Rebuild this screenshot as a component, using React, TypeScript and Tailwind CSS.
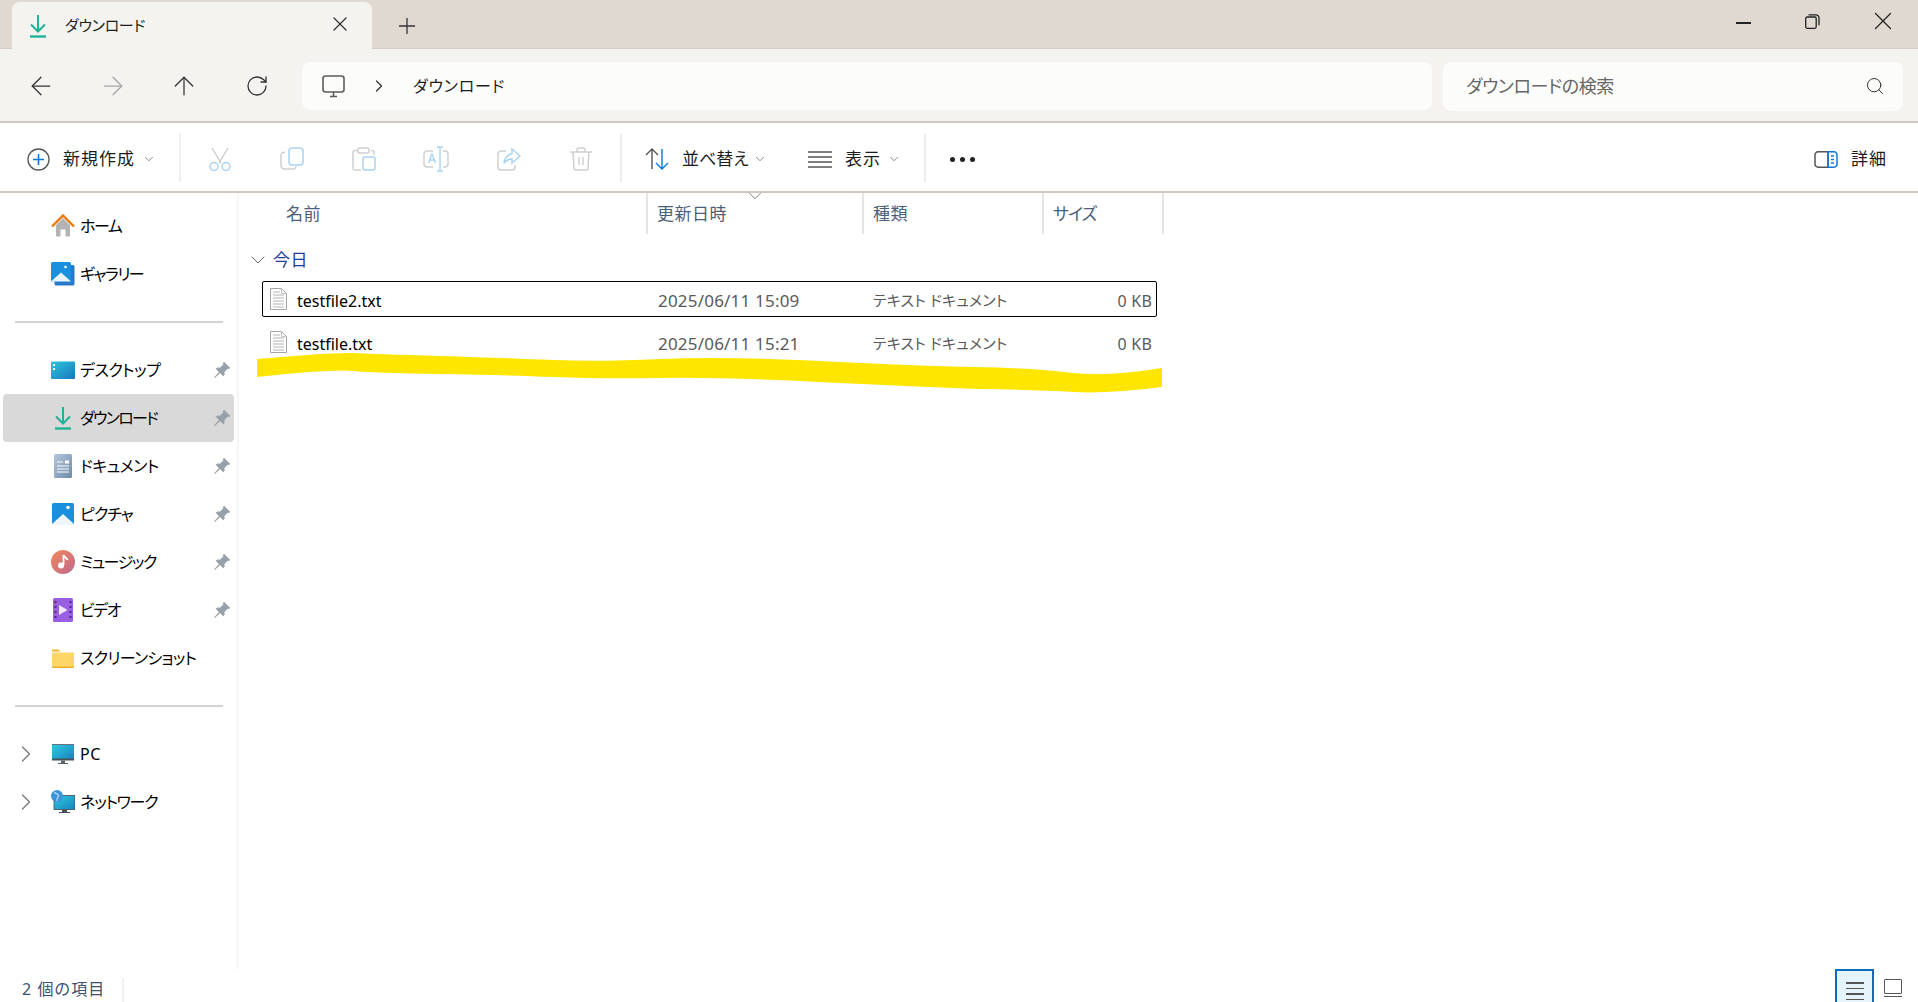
import { ChevronDown, ChevronRight, X, Plus, ArrowLeft, ArrowRight, ArrowUp, RotateCw, Search } from "lucide-react";
import type { ReactNode } from "react";

const Download = ({ size = 24 }: { size?: number }) => (
  <svg width={size} height={size} viewBox="0 0 24 24" fill="none" stroke="#1fb294" strokeWidth="2">
    <path d="M12 1v16M5 10.5l7 7 7-7" />
    <path d="M4 22.5h16" strokeWidth="2.4" />
  </svg>
);

const Pin = () => (
  <svg width="18" height="18" viewBox="0 0 16 16" fill="#98a1a9">
    <path d="M9.8.6l5.6 5.6-1.4 1-1-.3-2.8 2.8.1 2.6-1.3 1.3-2.7-2.9L1.600 15l-.6-.6 4.3-4.7-2.9-2.7 1.3-1.3 2.6.1 2.8-2.8-.3-1z" />
  </svg>
);

const Icon = ({ children }: { children: ReactNode }) => (
  <svg width="24" height="24" viewBox="0 0 24 24" fill="none">
    {children}
  </svg>
);

const HomeIcon = () => (
  <Icon>
    <path d="M5 11l7-7 7 7v10.5a1 1 0 01-1 1h-3.5v-7h-5v7H6a1 1 0 01-1-1z" fill="#b4b4b4" />
    <path d="M1 12.5L12 1.500l11 11" stroke="#e8790c" strokeWidth="2.4" />
  </Icon>
);
const GalleryIcon = () => (
  <Icon>
    <rect x="3.5" y="3" width="20" height="20.5" rx="1.5" fill="#2a78c9" />
    <rect x="0" y="0" width="20" height="19.5" rx="1.5" fill="#1a90de" />
    <path d="M0 19.5l10-9 10 9z" fill="#e9f4fc" />
    <circle cx="14.5" cy="5" r="1.3" fill="#fff" />
  </Icon>
);
const DesktopIcon = () => (
  <Icon>
    <defs>
      <linearGradient id="dsk" x1="0" y1="0" x2="1" y2="1">
        <stop offset="0" stopColor="#2cc6dd" />
        <stop offset="1" stopColor="#1876bb" />
      </linearGradient>
    </defs>
    <rect x="0" y="3.5" width="24" height="17.5" rx="1" fill="url(#dsk)" />
    <rect x="2" y="6" width="2" height="2" fill="#fff" />
    <rect x="2" y="10" width="2" height="2" fill="#fff" />
  </Icon>
);
const DocIcon = () => (
  <Icon>
    <defs>
      <linearGradient id="doc" x1="0" y1="0" x2="1" y2="1">
        <stop offset="0" stopColor="#b4c8de" />
        <stop offset="1" stopColor="#6f8ba8" />
      </linearGradient>
    </defs>
    <rect x="3" y="0" width="18" height="24" rx="1.5" fill="url(#doc)" />
    <path d="M6 8h6M6 12h12M6 15h12M6 18h12" stroke="#fff" strokeWidth="1.2" />
    <rect x="14" y="6.5" width="4" height="3" fill="#fff" />
  </Icon>
);
const PictureIcon = () => (
  <Icon>
    <rect x="1" y="1" width="22" height="22" rx="1.5" fill="#1a8fdd" />
    <path d="M1 22l11-10 11 10v1H1z" fill="#eef6fc" />
    <circle cx="17" cy="5.5" r="1.8" fill="#fff" />
  </Icon>
);
const MusicIcon = () => (
  <Icon>
    <defs>
      <linearGradient id="mus" x1="0" y1="0" x2="1" y2="1">
        <stop offset="0" stopColor="#f0885a" />
        <stop offset="1" stopColor="#c0688f" />
      </linearGradient>
    </defs>
    <circle cx="12" cy="12" r="12" fill="url(#mus)" />
    <path d="M12.5 5v10" stroke="#fff" strokeWidth="1.8" />
    <path d="M12.5 5c.5 2.5 3.5 2.5 4 5" stroke="#fff" strokeWidth="1.8" />
    <circle cx="10" cy="15.5" r="3" fill="#fff" />
  </Icon>
);
const VideoIcon = () => (
  <Icon>
    <rect x="2" y="0" width="20" height="24" rx="1.5" fill="#9a5ee0" />
    <path d="M3.5 3h2v2h-2zM3.5 8h2v2h-2zM3.5 13h2v2h-2zM3.5 18h2v2h-2zM18.5 3h2v2h-2zM18.5 8h2v2h-2zM18.5 13h2v2h-2zM18.5 18h2v2h-2z" fill="#4b2a86" />
    <path d="M8 7l8.5 5L8 17z" fill="#efe6fb" />
  </Icon>
);
const FolderIcon = () => (
  <Icon>
    <path d="M1 4.5a1 1 0 011-1h5.5l2 2H1z" fill="#efb528" />
    <rect x="1" y="6.5" width="22" height="15" rx="1" fill="#fdd667" />
    <path d="M1 20.5h22v.5a1 1 0 01-1 1H2a1 1 0 01-1-1z" fill="#eeb02c" />
  </Icon>
);
const PcIcon = () => (
  <Icon>
    <defs>
      <linearGradient id="pc" x1="0" y1="0" x2="1" y2="1">
        <stop offset="0" stopColor="#2fcbe0" />
        <stop offset="1" stopColor="#1782bd" />
      </linearGradient>
    </defs>
    <rect x="1" y="2" width="22" height="15.5" fill="url(#pc)" />
    <path d="M1 2h22v1H1z" fill="#6b7177" />
    <path d="M1 16.5h22v2H1z" fill="#4a5157" />
    <path d="M10 18.5h4v2.5h3v1H7v-1h3z" fill="#5c6368" />
  </Icon>
);
const NetworkIcon = () => (
  <Icon>
    <defs>
      <linearGradient id="net" x1="0" y1="0" x2="1" y2="1">
        <stop offset="0" stopColor="#2fcbe0" />
        <stop offset="1" stopColor="#1782bd" />
      </linearGradient>
    </defs>
    <rect x="3" y="5.5" width="21" height="14" fill="url(#net)" stroke="#3d4a52" strokeWidth="0.8" />
    <path d="M11 19.5h5v2.5h3v1H8v-1h3z" fill="#4a5157" />
    <circle cx="6" cy="6" r="6" fill="#3d93d8" />
    <path d="M3 2.5c2 1 4 1 4.5 3S5 8 6 11" stroke="#a9d5f5" strokeWidth="1.5" />
  </Icon>
);

const FileIcon = () => (
  <svg width="17" height="22" viewBox="0 0 17 22" fill="none">
    <path d="M.5.5h11l5 5v16H.5z" fill="#fff" stroke="#a4a4a4" />
    <path d="M11.5.5v5h5" stroke="#c4c4c4" />
    <path d="M3 4h7M3 7h11M3 10h11M3 13h11M3 16h11M3 19h11" stroke="#b4b4b4" />
  </svg>
);

const navItems = [
  { label: "ホーム", icon: <HomeIcon />, track: "tracking-[-1.5px]" },
  { label: "ギャラリー", icon: <GalleryIcon />, track: "tracking-[-1.5px]" },
  null,
  { label: "デスクトップ", icon: <DesktopIcon />, pin: true, track: "tracking-[-0.5px]" },
  { label: "ダウンロード", icon: <Download size={24} />, pin: true, active: true, track: "tracking-[-1.7px]" },
  { label: "ドキュメント", icon: <DocIcon />, pin: true, track: "tracking-[-0.5px]" },
  { label: "ピクチャ", icon: <PictureIcon />, pin: true, track: "tracking-[-1px]" },
  { label: "ミュージック", icon: <MusicIcon />, pin: true, track: "tracking-[-1.5px]" },
  { label: "ビデオ", icon: <VideoIcon />, pin: true, track: "tracking-[-1.5px]" },
  { label: "スクリーンショット", icon: <FolderIcon />, track: "tracking-[-0.7px]" },
  null,
  { label: "PC", icon: <PcIcon />, expand: true, track: "tracking-[0.5px]" },
  { label: "ネットワーク", icon: <NetworkIcon />, expand: true, track: "tracking-[-1.2px]" },
];

const files = [
  { name: "testfile2.txt", date: "2025/06/11 15:09", selected: true },
  { name: "testfile.txt", date: "2025/06/11 15:21" },
];

const Sep = ({ className = "" }: { className?: string }) => <div className={`w-[2px] h-12 bg-[#eeeeee] ${className}`} />;

export default function App() {
  return (
    <div className="w-[1918px] h-screen overflow-hidden flex flex-col bg-white text-black font-['Noto_Sans','Noto_Sans_CJK_JP',sans-serif] [font-feature-settings:'palt']">
      {/* title bar */}
      <div className="h-[49px] shrink-0 flex bg-[#e0d9d2] border-b border-[#d6cec6]">
        <div className="relative z-10 ml-[12px] mt-[2px] w-[360px] h-[47px] rounded-t-lg bg-[#f5f3f0] flex items-center pl-[14px]">
          <Download size={24} />
          <span className="ml-[15px] text-[15px] tracking-[-0.3px] text-[#1c1c1c]">ダウンロード</span>
          <X className="absolute left-[316px] top-[10px]" size={24} strokeWidth={1.3} color="#333" />
        </div>
        <Plus className="ml-[22px] mt-[13px]" size={26} strokeWidth={1.2} color="#333" />
        <div className="ml-auto flex pt-[14px] pr-[20px]">
          <div className="w-[15px] h-[1.5px] bg-[#222] mt-[8px]" />
          <svg className="ml-[54px]" width="15" height="15" viewBox="0 0 15 15" fill="none" stroke="#222" strokeWidth="1.3">
            <rect x="0.7" y="3" width="10.5" height="11.3" rx="1.5" />
            <path d="M3.5.8h7.5a3 3 0 013 3v7.5" />
          </svg>
          <X className="ml-[48px] -mt-[8px]" size={30} strokeWidth={1.05} color="#222" />
        </div>
      </div>

      {/* address row */}
      <div className="h-[74px] shrink-0 flex items-center pt-[2px] bg-[#f5f3f0] border-b-2 border-[#d0c8c0]">
        <ArrowLeft className="ml-[26px]" size={30} strokeWidth={1} color="#333" />
        <ArrowRight className="ml-[42px]" size={30} strokeWidth={1} color="#a6a6a6" />
        <ArrowUp className="ml-[41px]" size={30} strokeWidth={1} color="#333" />
        <RotateCw className="ml-[46px]" size={24} strokeWidth={1.3} color="#333" />
        <div className="ml-[33px] w-[1130px] h-[48px] rounded-lg bg-[#fcfcfb] flex items-center pl-[20px]">
          <svg width="23" height="23" viewBox="0 0 23 23" fill="none" stroke="#5c5c5c" strokeWidth="1.6">
            <rect x="1" y="1" width="21" height="16" rx="2.5" />
            <path d="M8 21.5h7M11.5 17v4.5" />
          </svg>
          <ChevronRight className="ml-[24px]" size={20} strokeWidth={1.5} color="#333" />
          <span className="ml-[24px] text-[16px] tracking-[0.8px] text-[#1c1c1c]">ダウンロード</span>
        </div>
        <div className="ml-[11px] w-[460px] h-[49px] rounded-lg bg-[#fcfcfb] flex items-center pl-[23px] pr-[18px]">
          <span className="text-[18px] text-[#666] tracking-[-0.4px]">ダウンロードの検索</span>
          <Search className="ml-auto" size={20} strokeWidth={1.2} color="#333" />
        </div>
      </div>

      {/* command bar */}
      <div className="h-[70px] shrink-0 flex items-center pt-[4px] border-b-2 border-[#d0c8c0] text-[#1c1c1c] text-[17px]">
        <svg className="ml-[27px]" width="23" height="23" viewBox="0 0 23 23" fill="none">
          <circle cx="11.5" cy="11.5" r="10.5" stroke="#555" strokeWidth="1.3" />
          <path d="M11.5 6v11M6 11.5h11" stroke="#0f78d4" strokeWidth="1.6" />
        </svg>
        <span className="ml-[13px] tracking-[1px]">新規作成</span>
        <ChevronDown className="ml-[7px]" size={14} strokeWidth={1.2} color="#555" />
        <Sep className="ml-[23px] -mt-[2px]" />
        <svg className="ml-[27px]" width="24" height="24" viewBox="0 0 24 24" fill="none">
          <path d="M4 1l9 15M20 1l-9 15" stroke="#c9c9c9" strokeWidth="1.3" />
          <circle cx="6" cy="19.5" r="4" stroke="#a9d3f2" strokeWidth="1.5" />
          <circle cx="18" cy="19.5" r="4" stroke="#a9d3f2" strokeWidth="1.5" />
        </svg>
        <svg className="ml-[48px]" width="24" height="24" viewBox="0 0 24 24" fill="none" strokeWidth="1.5">
          <path d="M5 5.500A3 3 0 001 8.500v10A3.500 3.500 0 004.500 22H13a3 3 0 003-2.500" stroke="#cfcfcf" />
          <rect x="9" y="1" width="14" height="17" rx="3" stroke="#a9d3f2" />
        </svg>
        <svg className="ml-[48px]" width="24" height="24" viewBox="0 0 24 24" fill="none" strokeWidth="1.5">
          <path d="M5 3.500H3A2 2 0 001 5.500v16A1.500 1.500 0 002.500 23H9M19 3.500h1A2 2 0 0122 5.500V8" stroke="#cfcfcf" />
          <rect x="6" y="1" width="11" height="5" rx="1.5" stroke="#cfcfcf" />
          <rect x="11" y="10" width="12" height="13" rx="2" stroke="#a9d3f2" />
        </svg>
        <svg className="ml-[47px]" width="26" height="26" viewBox="0 0 26 26" fill="none" strokeWidth="1.4">
          <path d="M10 5H4a3 3 0 00-3 3v10a3 3 0 003 3h6M20 5h2a3 3 0 013 3v10a3 3 0 01-3 3h-2" stroke="#cfcfcf" />
          <path d="M17 1v24M14 1h6M14 25h6" stroke="#a9d3f2" />
          <path d="M5.500 17l3.500-9 3.500 9M7 14h4" stroke="#a9d3f2" />
        </svg>
        <svg className="ml-[48px]" width="24" height="24" viewBox="0 0 24 24" fill="none" strokeWidth="1.5">
          <path d="M9 4H4a3 3 0 00-3 3v13a3 3 0 003 3h11a3 3 0 003-3v-2" stroke="#cfcfcf" />
          <path d="M15 2l8 7-8 7v-4c-4 0-6 1-8 4 .5-5 3-8 8-9.500z" stroke="#a9d3f2" />
        </svg>
        <svg className="ml-[48px]" width="24" height="24" viewBox="0 0 24 24" fill="none" stroke="#cfcfcf" strokeWidth="1.5">
          <path d="M1 5h22M8 5V3a2 2 0 012-2h4a2 2 0 012 2v2M4 5l1 16a2 2 0 002 2h10a2 2 0 002-2l1-16M10 10v8M14 10v8" />
        </svg>
        <Sep className="ml-[27px] -mt-[2px]" />
        <svg className="ml-[23px]" width="24" height="24" viewBox="0 0 24 24" fill="none" strokeWidth="1.4">
          <path d="M7 22V2M1 8l6-6 6 6" stroke="#555" />
          <path d="M17 2v20M11 16l6 6 6-6" stroke="#0f78d4" />
        </svg>
        <span className="ml-[13px] w-[64px] whitespace-nowrap">並べ替え</span>
        <ChevronDown className="ml-[7px]" size={14} strokeWidth={1.2} color="#555" />
        <svg className="ml-[41px]" width="24" height="17" viewBox="0 0 24 17" stroke="#555" strokeWidth="1.4">
          <path d="M0 1h24M0 6h24M0 11h24M0 16h24" />
        </svg>
        <span className="ml-[13px] w-[36px] tracking-[1px] whitespace-nowrap">表示</span>
        <ChevronDown className="ml-[6px]" size={14} strokeWidth={1.2} color="#555" />
        <Sep className="ml-[23px] -mt-[2px]" />
        <div className="ml-[24px] flex gap-[5px]">
          <span className="w-[5px] h-[5px] rounded-full bg-[#222]" />
          <span className="w-[5px] h-[5px] rounded-full bg-[#222]" />
          <span className="w-[5px] h-[5px] rounded-full bg-[#222]" />
        </div>
        <svg className="ml-auto" width="24" height="17" viewBox="0 0 24 17" fill="none" strokeWidth="1.5">
          <path d="M14 .8H4A3 3 0 001 3.800v9.400a3 3 0 003 3h10z" stroke="#555" />
          <path d="M14 .8h6a3 3 0 013 3v9.400a3 3 0 01-3 3h-6z" stroke="#0f78d4" />
          <path d="M17 5h3M17 8.500h3M17 12h3" stroke="#0f78d4" />
        </svg>
        <span className="ml-[13px] mr-[31px] tracking-[1px]">詳細</span>
      </div>

      <div className="flex-1 min-h-0 flex">
        {/* sidebar */}
        <div className="w-[239px] shrink-0 border-r-2 border-[#f5f5f5] pt-[9px]">
          {navItems.map((item, i) =>
            item ? (
              <div
                key={i}
                className={`ml-[3px] w-[231px] h-12 rounded flex items-center pr-[3px] ${item.active ? "bg-[#d9d9d9]" : ""}`}
              >
                <div className="w-[48px] pl-[9px] shrink-0">
                  {item.expand && <ChevronRight size={28} strokeWidth={1.1} color="#777" />}
                </div>
                <div className="w-[24px] shrink-0 flex justify-center">{item.icon}</div>
                <span className={`ml-[5px] text-[16px] leading-none ${item.track}`}>{item.label}</span>
                {item.pin && (
                  <span className="ml-auto">
                    <Pin />
                  </span>
                )}
              </div>
            ) : (
              <div key={i} className="h-12 flex items-center pl-[15px]">
                <div className="w-[208px] h-[2px] bg-[#d4d4d4]" />
              </div>
            ),
          )}
        </div>

        {/* file list */}
        <div className="relative flex-1 min-w-0">
          <div className="flex h-[41px] text-[17px] tracking-[0.5px] text-[#4c5f78]">
            <div className="w-[409px] h-full border-r-2 border-[#e5e5e5] pl-[47px] flex items-center">名前</div>
            <div className="relative w-[216px] h-full border-r-2 border-[#e5e5e5] pl-[9px] flex items-center">
              更新日時
              <ChevronDown className="absolute left-[96px] -top-[8px]" size={22} strokeWidth={0.8} color="#555" />
            </div>
            <div className="w-[180px] h-full border-r-2 border-[#e5e5e5] pl-[9px] flex items-center">種類</div>
            <div className="w-[120px] h-full border-r-2 border-[#e5e5e5] pl-[9px] flex items-center tracking-[-1px]">サイズ</div>
          </div>

          <div className="h-[47px] flex items-center pl-[7px] pt-[5px]">
            <ChevronDown size={24} strokeWidth={1} color="#666" />
            <span className="ml-[3px] text-[17px] tracking-[0.5px] text-[#1f3c9c]">今日</span>
          </div>

          <div className="flex flex-col gap-[7px]">
            {files.map((file) => (
              <div
                key={file.name}
                className={`ml-[23px] w-[895px] h-[36px] rounded-[2px] flex items-center pl-[7px] pr-[4px] border ${file.selected ? "border-black" : "border-transparent"}`}
              >
                <FileIcon />
                <span className="ml-[10px] w-[361px] text-[16px] leading-none pt-[3px]">{file.name}</span>
                <span className="w-[215px] text-[17px] tracking-[0.2px] leading-none text-[#5a5a5a] pt-[3px]">{file.date}</span>
                <span className="text-[15px] tracking-[0.15px] leading-none text-[#5a5a5a] pt-[3px]">テキスト ドキュメント</span>
                <span className="ml-auto text-[16px] tracking-[0.2px] leading-none text-[#5a5a5a] pt-[3px]">0 KB</span>
              </div>
            ))}
          </div>

          {/* marker stroke drawn over the screenshot */}
          <svg className="absolute left-[17px] top-[158px]" width="908" height="45" viewBox="0 0 908 45" fill="#ffe600">
            <path d="M1 8Q77 1 97 2Q117 3 184 5Q251 7 297 9Q344 11 404 8Q464 5 564 10Q664 15 719 16Q774 17 813 21.5Q852 26 906 17L906 36Q852 43 818 41Q784 39 724 38Q664 36 564 31Q464 26 404 27Q344 28 297 26Q251 24 184 23Q117 22 97 20Q77 18 1 26Z" />
          </svg>
        </div>
      </div>

      {/* status bar */}
      <div className="h-[33px] shrink-0 flex items-end text-[16px] text-[#3d5270]">
        <div className="h-[24px] ml-[22px] pr-[17px] border-r-2 border-[#f0f0f0] tracking-[1.1px] leading-[22px]">2 個の項目</div>
        <div className="ml-auto w-[39px] h-[33px] border-2 border-b-0 border-[#0f6cbd] bg-[#e5f3fb] flex flex-col items-center pt-[11px] gap-[4px]">
          <div className="w-[18px] h-[1.5px] bg-[#555]" />
          <div className="w-[18px] h-[1.5px] bg-[#555]" />
          <div className="w-[18px] h-[1.5px] bg-[#555]" />
          <div className="w-[18px] h-[1.5px] bg-[#555]" />
        </div>
        <div className="ml-[10px] mr-[16px] mb-[5px] flex flex-col gap-[2px]">
          <div className="w-[18px] h-[15px] border border-[#555] rounded-[1px]" />
          <div className="w-[18px] h-px bg-[#555]" />
        </div>
      </div>
    </div>
  );
}
